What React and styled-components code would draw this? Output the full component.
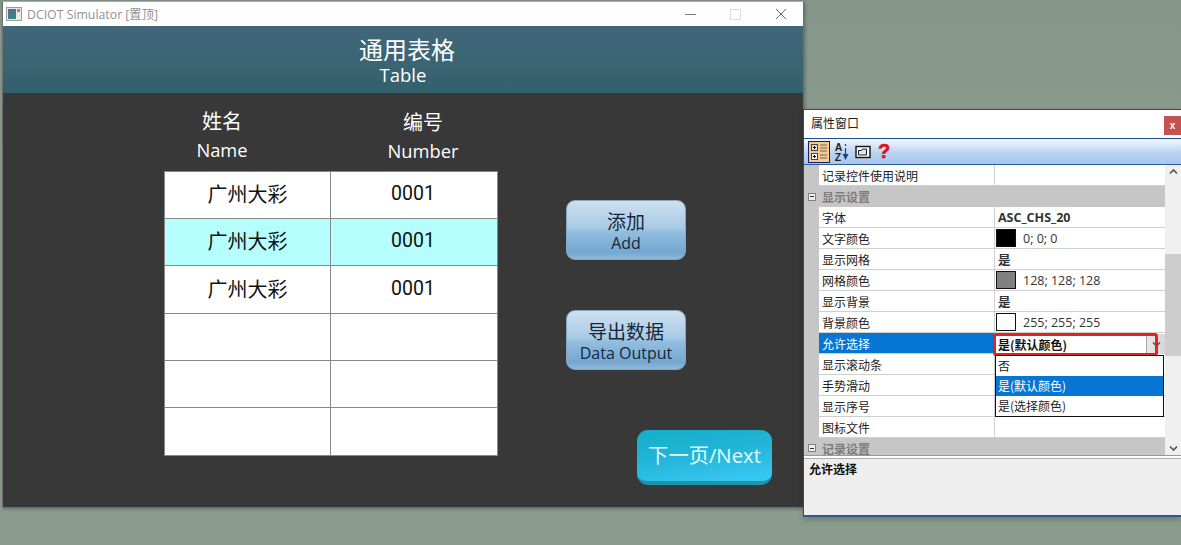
import styled, { createGlobalStyle } from 'styled-components';

const CJK = '"Noto Sans CJK SC", sans-serif';
const LATIN = '"Open Sans", "Noto Sans CJK SC", sans-serif';

const tableRows = [
  { name: '广州大彩', code: '0001' },
  { name: '广州大彩', code: '0001', active: true },
  { name: '广州大彩', code: '0001' },
  {},
  {},
  {},
];

const propRows = [
  { label: '记录控件使用说明' },
  { section: '显示设置' },
  { label: '字体', value: 'ASC_CHS_20', bold: true },
  { label: '文字颜色', swatch: '#000', value: '0; 0; 0' },
  { label: '显示网格', value: '是', bold: true },
  { label: '网格颜色', swatch: '#808080', value: '128; 128; 128' },
  { label: '显示背景', value: '是', bold: true },
  { label: '背景颜色', swatch: '#fff', value: '255; 255; 255' },
  { label: '允许选择', selected: true },
  { label: '显示滚动条' },
  { label: '手势滑动' },
  { label: '显示序号' },
  { label: '图标文件' },
  { section: '记录设置', clipped: true },
];

const GlobalStyle = createGlobalStyle`
  html, body {
    margin: 0;
    padding: 0;
    background: #8b9c8e;
  }
  * {
    box-sizing: border-box;
  }
`;

const Desktop = styled.div`
  position: relative;
  width: 1181px;
  height: 545px;
  overflow: hidden;
  background: linear-gradient(#85958a, #8b9c8e 30%);
`;

const SimWindow = styled.div`
  position: absolute;
  left: 2px;
  top: 1px;
  width: 802px;
  height: 507px;
  display: flex;
  flex-direction: column;
  border: 1px solid #6f6f6f;
  border-top-color: #aaa;
  box-shadow: 1px 1px 3px rgba(0, 0, 0, 0.3);
`;

const TitleBar = styled.div`
  height: 24px;
  flex: none;
  display: flex;
  align-items: center;
  padding-left: 3px;
  background: #fff;
`;

const TitleText = styled.span`
  margin-left: 5px;
  font: 12.3px ${LATIN};
  color: #929292;
`;

const WindowControls = styled.div`
  margin-left: auto;
  display: flex;
  align-items: center;
  gap: 34px;
  padding-right: 16px;
`;

const Header = styled.div`
  height: 67px;
  flex: none;
  display: flex;
  flex-direction: column;
  align-items: center;
  background: linear-gradient(#40677a, #3a6472 60%, #32606c);
  color: #fff;
`;

const HeaderTitle = styled.div`
  margin-top: 8px;
  margin-left: 8px;
  font: 24px/30px ${CJK};
`;

const HeaderSub = styled.div`
  font: 18.5px/22px ${LATIN};
`;

const Body = styled.div`
  flex: 1;
  display: flex;
  background: #383838;
`;

const TableColumn = styled.div`
  width: 334px;
  margin-left: 161px;
`;

const ColumnHeads = styled.div`
  height: 78px;
  display: flex;
  color: #fff;
`;

const ColumnHead = styled.div`
  width: ${({ $width }) => $width}px;
  margin-left: ${({ $offset }) => $offset}px;
  padding-top: ${({ $top }) => $top}px;
  text-align: center;
`;

const HeadCn = styled.div`
  font: 20px/28px ${CJK};
`;

const HeadEn = styled.div`
  font: 18.3px/26px ${LATIN};
  margin-top: 2px;
`;

const DataTable = styled.div`
  height: 285px;
  display: grid;
  grid-template-columns: 166px 167px;
  grid-template-rows: 47px 47px 48px 47px 47px 48px;
  border-top: 1px solid #888;
  border-left: 1px solid #888;
`;

const DataCell = styled.div`
  display: flex;
  align-items: center;
  justify-content: center;
  padding-bottom: 3px;
  padding-right: ${({ $mono }) => ($mono ? 2 : 0)}px;
  border-right: 1px solid #888;
  border-bottom: 1px solid #888;
  background: ${({ $active }) => ($active ? '#b5ffff' : '#fff')};
  color: #111;
  font: ${({ $mono }) => ($mono ? '19.5px "Roboto", sans-serif' : `20px ${CJK}`)};
`;

const ActionColumn = styled.div`
  display: flex;
  flex-direction: column;
  align-items: flex-start;
  margin-left: 68px;
  padding-top: 107px;
`;

const BlueButton = styled.div`
  width: 120px;
  height: 60px;
  margin-bottom: 50px;
  padding-top: 1px;
  display: flex;
  flex-direction: column;
  align-items: center;
  justify-content: center;
  border: 1px solid #8ba6bb;
  border-radius: 9px;
  background: linear-gradient(#cde0f0, #a8cae5 47%, #92bee0 53%, #74a7d1 88%, #8fb8d8);
  color: #14273c;
`;

const BlueCn = styled.div`
  font: 19px/24px ${CJK};
`;

const BlueEn = styled.div`
  font: 16px/20px ${LATIN};
`;

const NextButton = styled.div`
  width: 135px;
  height: 55px;
  margin: 10px 0 0 71px;
  padding-bottom: 3px;
  display: flex;
  align-items: center;
  justify-content: center;
  border-bottom: 4px solid #1b94ae;
  border-radius: 11px;
  background: linear-gradient(172deg, #14aec6, #22b4d8 45%, #3ccaf5);
  color: #e6fbff;
  font: 20.3px ${LATIN};
  white-space: nowrap;
`;

const PropWindow = styled.div`
  position: absolute;
  left: 803px;
  top: 109px;
  width: 378px;
  height: 408px;
  display: flex;
  flex-direction: column;
  border-left: 1px solid #3a4a6a;
  border-top: 1px solid #3a4a4a;
  border-bottom: 2px solid #33578f;
  background: #fff;
  box-shadow: 0 3px 6px rgba(0, 0, 0, 0.2);
`;

const PropTitleBar = styled.div`
  height: 28px;
  flex: none;
  display: flex;
  align-items: center;
  justify-content: space-between;
  padding: 0 0 3px 7px;
  font: 12px ${CJK};
  color: #222;
`;

const CloseBox = styled.div`
  width: 17px;
  height: 19px;
  margin-top: 5px;
  display: flex;
  align-items: center;
  justify-content: center;
  background: #c75050;
  color: #fff;
  font: bold 10px "Liberation Sans", sans-serif;
`;

const Toolbar = styled.div`
  height: 27px;
  flex: none;
  display: flex;
  align-items: center;
  gap: 4px;
  padding-left: 4px;
  border-top: 1px solid #1c4e9a;
  border-bottom: 1px solid #2c5c9c;
  background: linear-gradient(#f2f7fd, #bcd4f2 55%, #a8c5ec);
`;

const ToolButton = styled.div`
  width: ${({ $width }) => $width}px;
  height: 22px;
  display: flex;
  align-items: center;
  justify-content: center;
  border: ${({ $on }) => ($on ? '1px solid #10206e' : 'none')};
  background: ${({ $on }) => ($on ? '#f7c98a' : 'transparent')};
`;

const SortLetters = styled.div`
  display: flex;
  flex-direction: column;
  font: bold 10.5px/10px "Liberation Sans", sans-serif;
  color: #222;
`;

const HelpMark = styled.span`
  font: 900 20px "Liberation Sans", sans-serif;
  color: #e0101c;
  -webkit-text-stroke: 0.6px #e0101c;
`;

const GridArea = styled.div`
  position: relative;
  height: 291px;
  flex: none;
  display: flex;
  border-bottom: 1px solid #999;
`;

const PropGrid = styled.div`
  width: 361px;
  flex: none;
  overflow: hidden;
`;

const PropRow = styled.div`
  height: 21px;
  display: grid;
  grid-template-columns: 15px 175px 1fr;
`;

const Gutter = styled.div`
  background: #c6c6c6;
`;

const PropName = styled.div`
  display: flex;
  align-items: center;
  padding-left: 3px;
  border-bottom: 1px solid #cfcfcf;
  background: ${({ $selected }) => ($selected ? '#0675d3' : '#fff')};
  color: ${({ $selected }) => ($selected ? '#fff' : '#222')};
  font: 12px ${CJK};
`;

const PropValue = styled.div`
  display: flex;
  align-items: center;
  gap: 7px;
  padding-left: 3px;
  border-left: 1px solid #cfcfcf;
  border-bottom: 1px solid #cfcfcf;
  color: #333;
  font: ${({ $bold }) => ($bold ? 'bold 12.5px' : '12.5px')} ${LATIN};
`;

const Swatch = styled.span`
  width: 20px;
  height: 18px;
  flex: none;
  margin-left: -2px;
  border: 1px solid #111;
  background: ${({ $color }) => $color};
`;

const SectionRow = styled.div`
  height: ${({ $clipped }) => ($clipped ? 17 : 21)}px;
  display: flex;
  align-items: ${({ $clipped }) => ($clipped ? 'flex-start' : 'center')};
  gap: 6px;
  padding-left: 4px;
  background: #c6c6c6;
  color: #7c7c7c;
  font: bold 12px/21px ${CJK};
`;

const Collapse = styled.span`
  width: 8px;
  height: 8px;
  flex: none;
  margin-top: ${({ $clipped }) => ($clipped ? 6 : 0)}px;
  display: flex;
  align-items: center;
  justify-content: center;
  border: 1px solid #808080;
  background: #eee;

  &::after {
    content: '';
    width: 4px;
    height: 1px;
    background: #333;
  }
`;

const Scrollbar = styled.div`
  position: relative;
  flex: 1;
  display: flex;
  flex-direction: column;
  align-items: center;
  justify-content: space-between;
  padding: 3px 0;
  background: #f0f0f0;
`;

const ScrollThumb = styled.div`
  position: absolute;
  top: 89px;
  left: 0;
  right: 0;
  height: 102px;
  background: #cdcdcd;
`;

const ComboHighlight = styled.div`
  position: absolute;
  left: 189px;
  top: 168px;
  width: 165px;
  height: 23px;
  display: flex;
  align-items: center;
  padding-left: 2px;
  border: 3px solid #e3221b;
  border-radius: 3px;
  color: #111;
  font: bold 12px ${CJK};
`;

const ComboArrow = styled.div`
  position: absolute;
  left: 342px;
  top: 169px;
  width: 19px;
  height: 20px;
  display: flex;
  align-items: center;
  justify-content: center;
  border-left: 1px solid #aaa;
  background: linear-gradient(90deg, #e8e8e8, #d6d6d6);
`;

const DropList = styled.div`
  position: absolute;
  left: 191px;
  top: 190px;
  width: 169px;
  height: 62px;
  border: 1px solid #111;
  background: #fff;
`;

const DropItem = styled.div`
  height: 20px;
  padding-left: 2px;
  background: ${({ $on }) => ($on ? '#0675d3' : '#fff')};
  color: ${({ $on }) => ($on ? '#fff' : '#222')};
  font: 12px/20px ${CJK};
`;

const DescPane = styled.div`
  flex: 1;
  margin-top: 2px;
  padding: 1px 5px;
  border-top: 1px solid #aaa;
  background: #eeeeee;
  color: #111;
  font: bold 12px/18px ${CJK};
`;

const Chevron = ({ up }) => (
  <svg width="9" height="7" viewBox="0 0 9 7">
    <path d={up ? 'M1 5.5 4.5 2 8 5.5' : 'M1 1.5 4.5 5 8 1.5'} fill="none" stroke="#555" strokeWidth="1.6" />
  </svg>
);

const AppIcon = () => (
  <svg width="16" height="16" viewBox="0 0 16 16">
    <rect x="0.5" y="1.5" width="15" height="13" fill="#e8e8e8" stroke="#9a9a9a" />
    <rect x="2" y="3" width="8" height="10" fill="#3f7f86" />
    <rect x="2" y="3" width="8" height="4" fill="#54708c" />
    <rect x="11" y="3" width="3" height="3" fill="#7d8a95" />
  </svg>
);

const CategorizedIcon = () => (
  <svg width="18" height="18" viewBox="0 0 18 18">
    <rect x="1.5" y="1.5" width="6" height="6" fill="#ddd" stroke="#444" />
    <path d="M3 4.5h3M4.5 3v3" stroke="#000" />
    <rect x="1.5" y="10.5" width="6" height="6" fill="#fff" stroke="#444" />
    <path d="M3 13.5h3M4.5 12v3" stroke="#000" />
    <path d="M10 2h7M10 5h7M10 8h7M10 12h7M10 15h7" stroke="#6a6a6a" />
  </svg>
);

const DownArrow = () => (
  <svg width="7" height="18" viewBox="0 0 7 18">
    <path d="M3.5 1v2M3.5 5v7" stroke="#1c3f8c" strokeWidth="1.2" />
    <path d="M0.5 11h6L3.5 17z" fill="#1c3f8c" />
  </svg>
);

const PagesIcon = () => (
  <svg width="16" height="14" viewBox="0 0 16 14">
    <rect x="1" y="1.5" width="14" height="11" fill="#fff" stroke="#111" strokeWidth="1.4" />
    <path d="M3.5 5.5h3l1-1.5h4v6h-8z" fill="#d8e4f2" stroke="#222" />
  </svg>
);

const App = () => (
  <Desktop>
    <GlobalStyle />
    <SimWindow>
      <TitleBar>
        <AppIcon />
        <TitleText>DCIOT Simulator [置顶]</TitleText>
        <WindowControls>
          <svg width="11" height="11" viewBox="0 0 11 11">
            <path d="M0 5.5h11" stroke="#777" />
          </svg>
          <svg width="11" height="11" viewBox="0 0 11 11">
            <rect x="0.5" y="0.5" width="10" height="10" fill="none" stroke="#ddd" />
          </svg>
          <svg width="12" height="12" viewBox="0 0 12 12">
            <path d="M1 1 11 11M11 1 1 11" stroke="#666" />
          </svg>
        </WindowControls>
      </TitleBar>
      <Header>
        <HeaderTitle>通用表格</HeaderTitle>
        <HeaderSub>Table</HeaderSub>
      </Header>
      <Body>
        <TableColumn>
          <ColumnHeads>
            <ColumnHead $width={120} $offset={-2} $top={14}>
              <HeadCn>姓名</HeadCn>
              <HeadEn>Name</HeadEn>
            </ColumnHead>
            <ColumnHead $width={120} $offset={81} $top={15}>
              <HeadCn>编号</HeadCn>
              <HeadEn>Number</HeadEn>
            </ColumnHead>
          </ColumnHeads>
          <DataTable>
            {tableRows.map((row, i) => [
              <DataCell key={`n${i}`} $active={row.active}>{row.name}</DataCell>,
              <DataCell key={`c${i}`} $active={row.active} $mono>{row.code}</DataCell>,
            ])}
          </DataTable>
        </TableColumn>
        <ActionColumn>
          <BlueButton>
            <BlueCn>添加</BlueCn>
            <BlueEn>Add</BlueEn>
          </BlueButton>
          <BlueButton>
            <BlueCn>导出数据</BlueCn>
            <BlueEn>Data Output</BlueEn>
          </BlueButton>
          <NextButton>下一页/Next</NextButton>
        </ActionColumn>
      </Body>
    </SimWindow>

    <PropWindow>
      <PropTitleBar>
        属性窗口
        <CloseBox>x</CloseBox>
      </PropTitleBar>
      <Toolbar>
        <ToolButton $on $width={22}><CategorizedIcon /></ToolButton>
        <ToolButton $width={16}>
          <SortLetters><span>A</span><span>Z</span></SortLetters>
          <DownArrow />
        </ToolButton>
        <ToolButton $width={18}><PagesIcon /></ToolButton>
        <ToolButton $width={16}><HelpMark>?</HelpMark></ToolButton>
      </Toolbar>
      <GridArea>
        <PropGrid>
          {propRows.map((row, i) =>
            row.section ? (
              <SectionRow key={i} $clipped={row.clipped}>
                <Collapse $clipped={row.clipped} />
                {row.section}
              </SectionRow>
            ) : (
              <PropRow key={i}>
                <Gutter />
                <PropName $selected={row.selected}>{row.label}</PropName>
                <PropValue $bold={row.bold}>
                  {row.swatch && <Swatch $color={row.swatch} />}
                  {row.value}
                </PropValue>
              </PropRow>
            )
          )}
        </PropGrid>
        <Scrollbar>
          <Chevron up />
          <ScrollThumb />
          <Chevron />
        </Scrollbar>
        <ComboArrow><Chevron /></ComboArrow>
        <ComboHighlight>是(默认颜色)</ComboHighlight>
        <DropList>
          <DropItem>否</DropItem>
          <DropItem $on>是(默认颜色)</DropItem>
          <DropItem>是(选择颜色)</DropItem>
        </DropList>
      </GridArea>
      <DescPane>允许选择</DescPane>
    </PropWindow>
  </Desktop>
);

export default App;
